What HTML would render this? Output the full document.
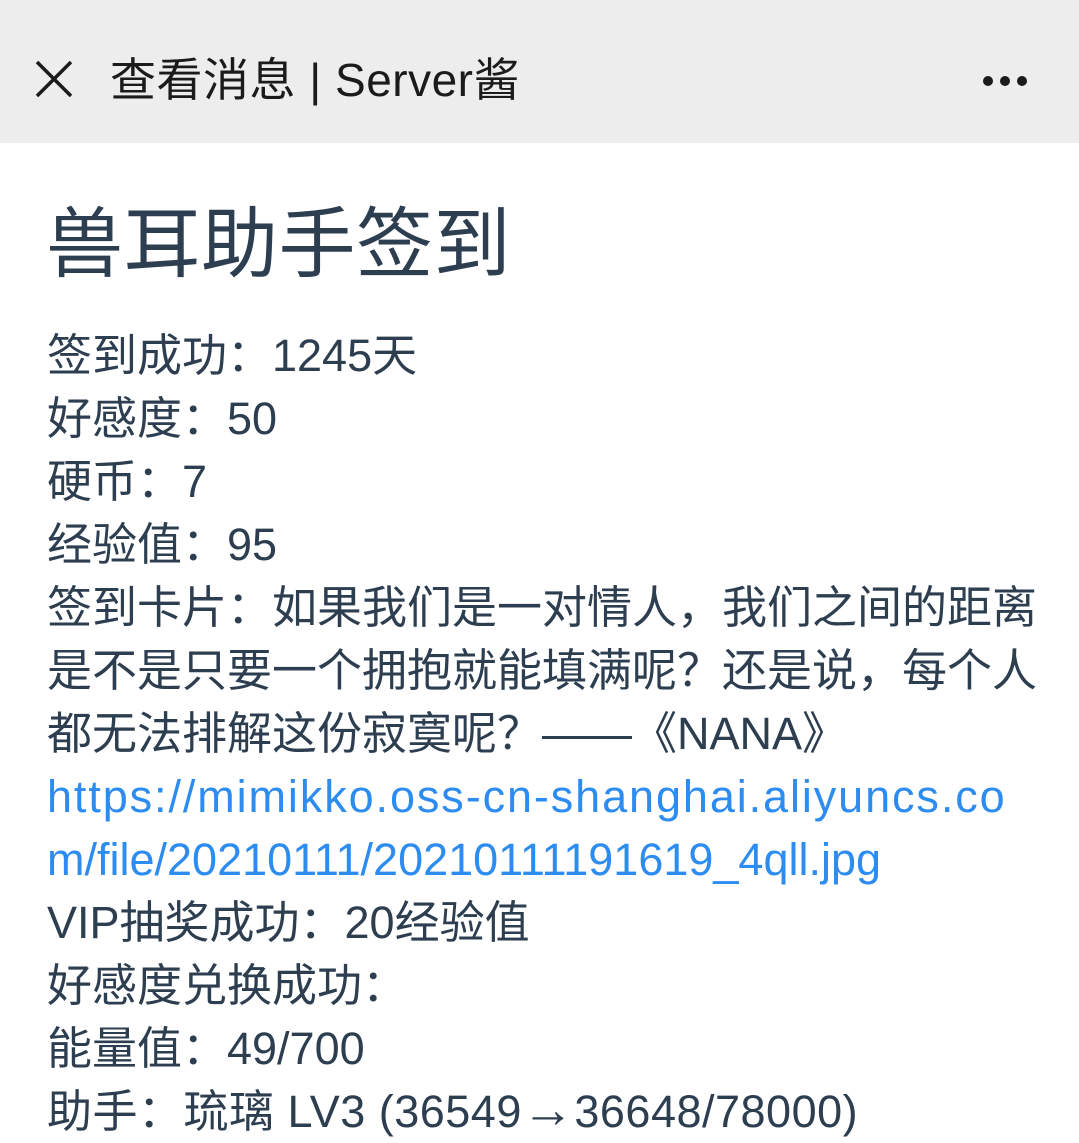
<!DOCTYPE html>
<html><head><meta charset="utf-8"><style>
html,body{margin:0;padding:0;background:#fff;width:1079px;height:1140px;overflow:hidden}
body{font-family:"Liberation Sans","Noto Sans CJK SC",sans-serif}
.hdr{position:absolute;left:0;top:0;width:1079px;height:143px;background:#ededed}
.ht{position:absolute;left:110px;top:50px;font-size:46px;line-height:60px;color:#1b1b1b;white-space:nowrap;letter-spacing:0.5px}
.dots{position:absolute;left:983px;top:73px}
.dots i{display:inline-block;width:10px;height:10px;border-radius:50%;background:#1b1b1b;margin-right:7px}
h1{position:absolute;left:46px;top:197px;margin:0;font-size:77px;line-height:96px;font-weight:normal;color:#2c3e50;white-space:nowrap;letter-spacing:0.5px}
.c{position:absolute;left:47px;top:324px;font-size:45px;line-height:63px;color:#2c3e50;white-space:nowrap}
a{color:#2d8cf0;text-decoration:none}
.ar{font-size:52px;line-height:40px}
</style></head><body>
<div class="hdr">
<svg style="position:absolute;left:35px;top:60px" width="38" height="38" viewBox="0 0 38 38"><path d="M2 2L36 36M36 2L2 36" stroke="#1b1b1b" stroke-width="3.5" fill="none"/></svg>
<div class="ht">查看消息 | Server酱</div>
<div class="dots"><i></i><i></i><i></i></div>
</div>
<h1>兽耳助手签到</h1>
<div class="c">签到成功：1245天<br>好感度：50<br>硬币：7<br>经验值：95<br>签到卡片：如果我们是一对情人，我们之间的距离<br>是不是只要一个拥抱就能填满呢？还是说，每个人<br>都无法排解这份寂寞呢？——《NANA》<br><a><span style="letter-spacing:1.9px">https://mimikko.oss-cn-shanghai.aliyuncs.co</span><br>m/file/20210111/20210111191619_4qll.jpg</a><br>VIP抽奖成功：20经验值<br>好感度兑换成功：<br>能量值：49/700<br><span style="letter-spacing:0.5px">助手：琉璃 LV3 (36549<span class="ar">→</span>36648/78000)</span></div>
</body></html>
